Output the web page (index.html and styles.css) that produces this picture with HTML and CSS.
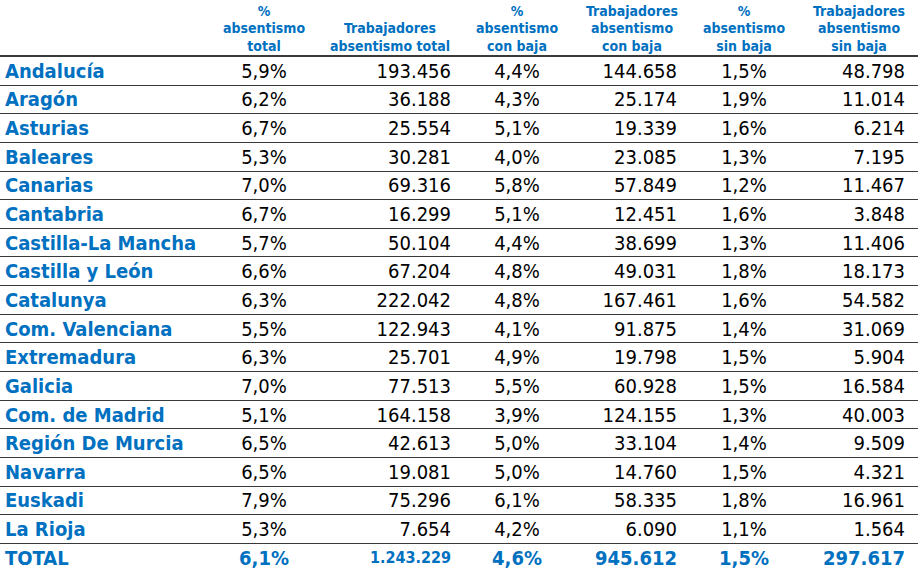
FILE: index.html
```html
<!DOCTYPE html>
<html lang="es">
<head>
<meta charset="utf-8">
<title>Absentismo por comunidad</title>
<link rel="stylesheet" href="styles.css">
</head>
<body>
<table class="tabla">
  <colgroup>
    <col class="c0"><col class="c1"><col class="c2"><col class="c3"><col class="c4"><col class="c5"><col class="c6">
  </colgroup>
  <thead>
    <tr>
      <th></th>
      <th>%<br>absentismo<br>total</th>
      <th>Trabajadores<br>absentismo total</th>
      <th>%<br>absentismo<br>con baja</th>
      <th>Trabajadores<br>absentismo<br>con baja</th>
      <th>%<br>absentismo<br>sin baja</th>
      <th class="h6">Trabajadores<br>absentismo<br>sin baja</th>
    </tr>
  </thead>
  <tbody>
    <tr><td class="n">Andalucía</td><td class="p">5,9%</td><td class="v2">193.456</td><td class="p">4,4%</td><td class="v4">144.658</td><td class="p">1,5%</td><td class="v6">48.798</td></tr>
    <tr><td class="n">Aragón</td><td class="p">6,2%</td><td class="v2">36.188</td><td class="p">4,3%</td><td class="v4">25.174</td><td class="p">1,9%</td><td class="v6">11.014</td></tr>
    <tr><td class="n">Asturias</td><td class="p">6,7%</td><td class="v2">25.554</td><td class="p">5,1%</td><td class="v4">19.339</td><td class="p">1,6%</td><td class="v6">6.214</td></tr>
    <tr><td class="n">Baleares</td><td class="p">5,3%</td><td class="v2">30.281</td><td class="p">4,0%</td><td class="v4">23.085</td><td class="p">1,3%</td><td class="v6">7.195</td></tr>
    <tr><td class="n">Canarias</td><td class="p">7,0%</td><td class="v2">69.316</td><td class="p">5,8%</td><td class="v4">57.849</td><td class="p">1,2%</td><td class="v6">11.467</td></tr>
    <tr><td class="n">Cantabria</td><td class="p">6,7%</td><td class="v2">16.299</td><td class="p">5,1%</td><td class="v4">12.451</td><td class="p">1,6%</td><td class="v6">3.848</td></tr>
    <tr><td class="n">Castilla-La Mancha</td><td class="p">5,7%</td><td class="v2">50.104</td><td class="p">4,4%</td><td class="v4">38.699</td><td class="p">1,3%</td><td class="v6">11.406</td></tr>
    <tr><td class="n">Castilla y León</td><td class="p">6,6%</td><td class="v2">67.204</td><td class="p">4,8%</td><td class="v4">49.031</td><td class="p">1,8%</td><td class="v6">18.173</td></tr>
    <tr><td class="n">Catalunya</td><td class="p">6,3%</td><td class="v2">222.042</td><td class="p">4,8%</td><td class="v4">167.461</td><td class="p">1,6%</td><td class="v6">54.582</td></tr>
    <tr><td class="n">Com. Valenciana</td><td class="p">5,5%</td><td class="v2">122.943</td><td class="p">4,1%</td><td class="v4">91.875</td><td class="p">1,4%</td><td class="v6">31.069</td></tr>
    <tr><td class="n">Extremadura</td><td class="p">6,3%</td><td class="v2">25.701</td><td class="p">4,9%</td><td class="v4">19.798</td><td class="p">1,5%</td><td class="v6">5.904</td></tr>
    <tr><td class="n">Galicia</td><td class="p">7,0%</td><td class="v2">77.513</td><td class="p">5,5%</td><td class="v4">60.928</td><td class="p">1,5%</td><td class="v6">16.584</td></tr>
    <tr><td class="n">Com. de Madrid</td><td class="p">5,1%</td><td class="v2">164.158</td><td class="p">3,9%</td><td class="v4">124.155</td><td class="p">1,3%</td><td class="v6">40.003</td></tr>
    <tr><td class="n">Región De Murcia</td><td class="p">6,5%</td><td class="v2">42.613</td><td class="p">5,0%</td><td class="v4">33.104</td><td class="p">1,4%</td><td class="v6">9.509</td></tr>
    <tr><td class="n">Navarra</td><td class="p">6,5%</td><td class="v2">19.081</td><td class="p">5,0%</td><td class="v4">14.760</td><td class="p">1,5%</td><td class="v6">4.321</td></tr>
    <tr><td class="n">Euskadi</td><td class="p">7,9%</td><td class="v2">75.296</td><td class="p">6,1%</td><td class="v4">58.335</td><td class="p">1,8%</td><td class="v6">16.961</td></tr>
    <tr><td class="n">La Rioja</td><td class="p">5,3%</td><td class="v2">7.654</td><td class="p">4,2%</td><td class="v4">6.090</td><td class="p">1,1%</td><td class="v6">1.564</td></tr>
    <tr class="total"><td class="n">TOTAL</td><td class="p">6,1%</td><td class="v2 small">1.243.229</td><td class="p">4,6%</td><td class="v4">945.612</td><td class="p">1,5%</td><td class="v6">297.617</td></tr>
  </tbody>
</table>
</body>
</html>
```

FILE: styles.css
```css
html, body {
  margin: 0;
  padding: 0;
  background: #ffffff;
}

.tabla {
  width: 918px;
  table-layout: fixed;
  border-collapse: collapse;
  border-spacing: 0;
  font-family: "DejaVu Sans Condensed", "DejaVu Sans", sans-serif;
}

.c0 { width: 218px; }
.c1 { width: 92px; }
.c2 { width: 160px; }
.c3 { width: 94px; }
.c4 { width: 136px; }
.c5 { width: 88px; }
.c6 { width: 130px; }

.tabla th {
  height: 55px;
  padding: 0;
  vertical-align: bottom;
  text-align: center;
  color: #0070c0;
  font-size: 14px;
  line-height: 17.5px;
  font-weight: bold;
  border-bottom: 2px solid #3a3a3a;
}

.tabla th.h6 {
  padding-left: 12px;
}

.tabla td {
  height: 27.65px;
  padding: 0;
  font-size: 20px;
  line-height: 24px;
  color: #000000;
  border-bottom: 1px solid #3a3a3a;
  white-space: nowrap;
}

.tabla td.n {
  padding-left: 5px;
  color: #0070c0;
  font-weight: bold;
}

.tabla td.p { text-align: center; }
.tabla td.v2 { text-align: right; padding-right: 19px; }
.tabla td.v4 { text-align: right; padding-right: 23px; }
.tabla td.v6 { text-align: right; padding-right: 13px; }

.tabla tr.total td {
  color: #0070c0;
  font-weight: bold;
  border-bottom: none;
}

.tabla tr.total td.small {
  font-size: 16px;
}
```
